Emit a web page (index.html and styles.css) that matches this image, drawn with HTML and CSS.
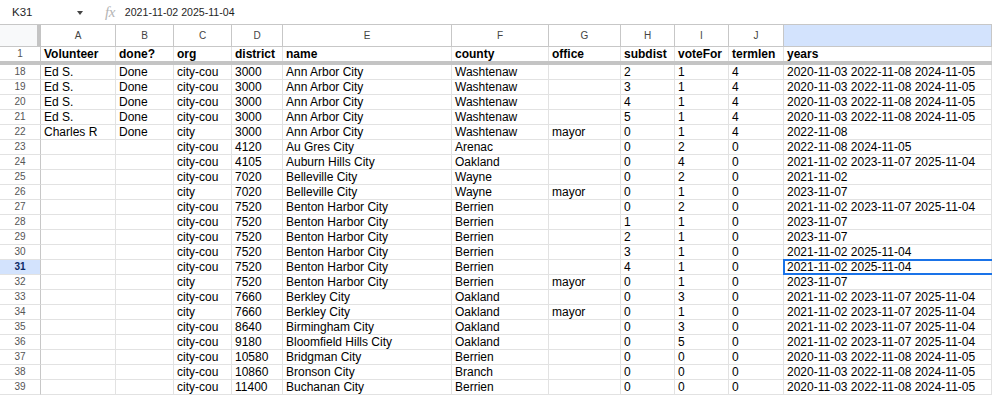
FILE: index.html
```html
<!DOCTYPE html>
<html>
<head>
<meta charset="utf-8">
<link rel="stylesheet" href="styles.css">
</head>
<body>
<div class="topbar">
  <div class="namebox">K31</div>
  <div class="caret"></div>
  <div class="fx">fx</div>
  <div class="formula">2021-11-02 2025-11-04</div>
</div>
<div class="sheet">
  <div class="row colhead">
    <div class="c corner"></div>
    <div class="c">A</div><div class="c">B</div><div class="c">C</div><div class="c">D</div><div class="c">E</div><div class="c">F</div><div class="c">G</div><div class="c">H</div><div class="c">I</div><div class="c">J</div><div class="c sel"></div>
  </div>
  <div class="row hdr">
    <div class="c rn">1</div>
    <div class="c">Volunteer</div><div class="c">done?</div><div class="c">org</div><div class="c">district</div><div class="c">name</div><div class="c">county</div><div class="c">office</div><div class="c">subdist</div><div class="c">voteFor</div><div class="c">termlen</div><div class="c">years</div>
  </div>
  <div class="freeze"></div>
  <div class="row"><div class="c rn">18</div><div class="c">Ed S.</div><div class="c">Done</div><div class="c">city-cou</div><div class="c">3000</div><div class="c">Ann Arbor City</div><div class="c">Washtenaw</div><div class="c"></div><div class="c">2</div><div class="c">1</div><div class="c">4</div><div class="c">2020-11-03 2022-11-08 2024-11-05</div></div>
  <div class="row"><div class="c rn">19</div><div class="c">Ed S.</div><div class="c">Done</div><div class="c">city-cou</div><div class="c">3000</div><div class="c">Ann Arbor City</div><div class="c">Washtenaw</div><div class="c"></div><div class="c">3</div><div class="c">1</div><div class="c">4</div><div class="c">2020-11-03 2022-11-08 2024-11-05</div></div>
  <div class="row"><div class="c rn">20</div><div class="c">Ed S.</div><div class="c">Done</div><div class="c">city-cou</div><div class="c">3000</div><div class="c">Ann Arbor City</div><div class="c">Washtenaw</div><div class="c"></div><div class="c">4</div><div class="c">1</div><div class="c">4</div><div class="c">2020-11-03 2022-11-08 2024-11-05</div></div>
  <div class="row"><div class="c rn">21</div><div class="c">Ed S.</div><div class="c">Done</div><div class="c">city-cou</div><div class="c">3000</div><div class="c">Ann Arbor City</div><div class="c">Washtenaw</div><div class="c"></div><div class="c">5</div><div class="c">1</div><div class="c">4</div><div class="c">2020-11-03 2022-11-08 2024-11-05</div></div>
  <div class="row"><div class="c rn">22</div><div class="c">Charles R</div><div class="c">Done</div><div class="c">city</div><div class="c">3000</div><div class="c">Ann Arbor City</div><div class="c">Washtenaw</div><div class="c">mayor</div><div class="c">0</div><div class="c">1</div><div class="c">4</div><div class="c">2022-11-08</div></div>
  <div class="row"><div class="c rn">23</div><div class="c"></div><div class="c"></div><div class="c">city-cou</div><div class="c">4120</div><div class="c">Au Gres City</div><div class="c">Arenac</div><div class="c"></div><div class="c">0</div><div class="c">2</div><div class="c">0</div><div class="c">2022-11-08 2024-11-05</div></div>
  <div class="row"><div class="c rn">24</div><div class="c"></div><div class="c"></div><div class="c">city-cou</div><div class="c">4105</div><div class="c">Auburn Hills City</div><div class="c">Oakland</div><div class="c"></div><div class="c">0</div><div class="c">4</div><div class="c">0</div><div class="c">2021-11-02 2023-11-07 2025-11-04</div></div>
  <div class="row"><div class="c rn">25</div><div class="c"></div><div class="c"></div><div class="c">city-cou</div><div class="c">7020</div><div class="c">Belleville City</div><div class="c">Wayne</div><div class="c"></div><div class="c">0</div><div class="c">2</div><div class="c">0</div><div class="c">2021-11-02</div></div>
  <div class="row"><div class="c rn">26</div><div class="c"></div><div class="c"></div><div class="c">city</div><div class="c">7020</div><div class="c">Belleville City</div><div class="c">Wayne</div><div class="c">mayor</div><div class="c">0</div><div class="c">1</div><div class="c">0</div><div class="c">2023-11-07</div></div>
  <div class="row"><div class="c rn">27</div><div class="c"></div><div class="c"></div><div class="c">city-cou</div><div class="c">7520</div><div class="c">Benton Harbor City</div><div class="c">Berrien</div><div class="c"></div><div class="c">0</div><div class="c">2</div><div class="c">0</div><div class="c">2021-11-02 2023-11-07 2025-11-04</div></div>
  <div class="row"><div class="c rn">28</div><div class="c"></div><div class="c"></div><div class="c">city-cou</div><div class="c">7520</div><div class="c">Benton Harbor City</div><div class="c">Berrien</div><div class="c"></div><div class="c">1</div><div class="c">1</div><div class="c">0</div><div class="c">2023-11-07</div></div>
  <div class="row"><div class="c rn">29</div><div class="c"></div><div class="c"></div><div class="c">city-cou</div><div class="c">7520</div><div class="c">Benton Harbor City</div><div class="c">Berrien</div><div class="c"></div><div class="c">2</div><div class="c">1</div><div class="c">0</div><div class="c">2023-11-07</div></div>
  <div class="row"><div class="c rn">30</div><div class="c"></div><div class="c"></div><div class="c">city-cou</div><div class="c">7520</div><div class="c">Benton Harbor City</div><div class="c">Berrien</div><div class="c"></div><div class="c">3</div><div class="c">1</div><div class="c">0</div><div class="c">2021-11-02 2025-11-04</div></div>
  <div class="row"><div class="c rn active">31</div><div class="c"></div><div class="c"></div><div class="c">city-cou</div><div class="c">7520</div><div class="c">Benton Harbor City</div><div class="c">Berrien</div><div class="c"></div><div class="c">4</div><div class="c">1</div><div class="c">0</div><div class="c current">2021-11-02 2025-11-04</div></div>
  <div class="row"><div class="c rn">32</div><div class="c"></div><div class="c"></div><div class="c">city</div><div class="c">7520</div><div class="c">Benton Harbor City</div><div class="c">Berrien</div><div class="c">mayor</div><div class="c">0</div><div class="c">1</div><div class="c">0</div><div class="c">2023-11-07</div></div>
  <div class="row"><div class="c rn">33</div><div class="c"></div><div class="c"></div><div class="c">city-cou</div><div class="c">7660</div><div class="c">Berkley City</div><div class="c">Oakland</div><div class="c"></div><div class="c">0</div><div class="c">3</div><div class="c">0</div><div class="c">2021-11-02 2023-11-07 2025-11-04</div></div>
  <div class="row"><div class="c rn">34</div><div class="c"></div><div class="c"></div><div class="c">city</div><div class="c">7660</div><div class="c">Berkley City</div><div class="c">Oakland</div><div class="c">mayor</div><div class="c">0</div><div class="c">1</div><div class="c">0</div><div class="c">2021-11-02 2023-11-07 2025-11-04</div></div>
  <div class="row"><div class="c rn">35</div><div class="c"></div><div class="c"></div><div class="c">city-cou</div><div class="c">8640</div><div class="c">Birmingham City</div><div class="c">Oakland</div><div class="c"></div><div class="c">0</div><div class="c">3</div><div class="c">0</div><div class="c">2021-11-02 2023-11-07 2025-11-04</div></div>
  <div class="row"><div class="c rn">36</div><div class="c"></div><div class="c"></div><div class="c">city-cou</div><div class="c">9180</div><div class="c">Bloomfield Hills City</div><div class="c">Oakland</div><div class="c"></div><div class="c">0</div><div class="c">5</div><div class="c">0</div><div class="c">2021-11-02 2023-11-07 2025-11-04</div></div>
  <div class="row"><div class="c rn">37</div><div class="c"></div><div class="c"></div><div class="c">city-cou</div><div class="c">10580</div><div class="c">Bridgman City</div><div class="c">Berrien</div><div class="c"></div><div class="c">0</div><div class="c">0</div><div class="c">0</div><div class="c">2020-11-03 2022-11-08 2024-11-05</div></div>
  <div class="row"><div class="c rn">38</div><div class="c"></div><div class="c"></div><div class="c">city-cou</div><div class="c">10860</div><div class="c">Bronson City</div><div class="c">Branch</div><div class="c"></div><div class="c">0</div><div class="c">0</div><div class="c">0</div><div class="c">2020-11-03 2022-11-08 2024-11-05</div></div>
  <div class="row"><div class="c rn">39</div><div class="c"></div><div class="c"></div><div class="c">city-cou</div><div class="c">11400</div><div class="c">Buchanan City</div><div class="c">Berrien</div><div class="c"></div><div class="c">0</div><div class="c">0</div><div class="c">0</div><div class="c">2020-11-03 2022-11-08 2024-11-05</div></div>
</div>
</body>
</html>
```

FILE: styles.css
```css
html, body {
  margin: 0;
  padding: 0;
  background: #fff;
  overflow: hidden;
}
body {
  font-family: "Liberation Sans", Arial, sans-serif;
  color: #000;
}
.topbar {
  height: 24px;
  border-bottom: 1px solid #c7c7c7;
  display: flex;
  align-items: center;
  font-size: 11px;
  color: #1f1f1f;
}
.namebox {
  margin-left: 12px;
  width: 62px;
  font-size: 11.5px;
}
.caret {
  width: 0;
  height: 0;
  border-left: 3.5px solid transparent;
  border-right: 3.5px solid transparent;
  border-top: 4px solid #444;
  margin-left: 3px;
  margin-top: 1px;
}
.fx {
  margin-left: 22px;
  font-family: "Liberation Serif", serif;
  font-style: italic;
  font-size: 15px;
  color: #b4b4b4;
  letter-spacing: -0.5px;
}
.formula {
  margin-left: 10px;
  font-size: 10.6px;
}
.row {
  display: grid;
  grid-template-columns: 41px 75px 58px 58px 51px 169px 97px 72px 54px 54px 55px 1fr;
  height: 15px;
}
.c {
  box-sizing: border-box;
  border-right: 1px solid #e2e2e2;
  border-bottom: 1px solid #e2e2e2;
  padding-left: 3px;
  font-size: 12px;
  line-height: 14px;
  white-space: nowrap;
  overflow: hidden;
}
.rn {
  border-right-color: #c7c7c7;
  text-align: center;
  padding-left: 0;
  font-size: 10px;
  color: #555;
}
.rn.active {
  background: #d3e3fd;
  color: #0b2a66;
  font-weight: bold;
}
.colhead {
  height: 22px;
}
.colhead .c {
  border-right-color: #c7c7c7;
  border-bottom-color: #c7c7c7;
  text-align: center;
  padding-left: 0;
  font-size: 10px;
  line-height: 21px;
  color: #444;
}
.colhead .corner {
  background: #f8f9fa;
  border-right: 4px solid #c4c4c4;
}
.colhead .sel {
  background: #d3e3fd;
}
.hdr {
  height: 14px;
}
.hdr .c {
  font-weight: bold;
  border-bottom: none;
}
.hdr .rn {
  font-weight: normal;
}
.freeze {
  height: 4px;
  background: #c4c4c4;
}
.current {
  position: relative;
  overflow: visible;
}
.current::after {
  content: "";
  position: absolute;
  left: -1px;
  top: -1px;
  right: -4px;
  bottom: -1px;
  border: 2px solid #1a73e8;
  pointer-events: none;
}
```
